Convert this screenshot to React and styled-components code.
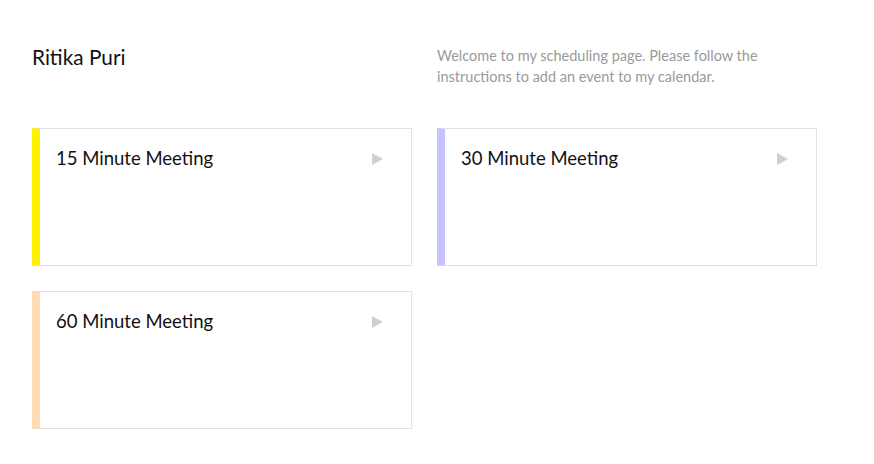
import React from "react";
import styled, { createGlobalStyle } from "styled-components";

const Global = createGlobalStyle`
  body {
    margin: 0;
    background: #fff;
    font-family: Lato, "Open Sans", sans-serif;
    color: #111;
  }
`;

const Page = styled.div`
  padding: 45px 32px 32px;
`;

const Grid = styled.div`
  display: grid;
  grid-template-columns: 380px 380px;
  column-gap: 25px;
  row-gap: 25px;
`;

const Header = styled(Grid)`
  margin-bottom: 41px;
  align-items: start;
`;

const Name = styled.h1`
  margin: 0;
  font-size: 20.8px;
  font-weight: 400;
  line-height: 24px;
`;

const Intro = styled.p`
  margin: 0;
  font-size: 14.5px;
  line-height: 21px;
  color: #9a9a9a;
`;

const Card = styled.div`
  height: 138px;
  box-sizing: border-box;
  border: 1px solid #e2e2e2;
  border-left: 8px solid ${(p) => p.$color};
  display: flex;
  justify-content: space-between;
  align-items: flex-start;
  padding: 17px 28px 0 16px;
  cursor: pointer;
`;

const Title = styled.div`
  font-size: 18.5px;
  line-height: 24px;
`;

const Arrow = styled.span`
  width: 0;
  height: 0;
  margin-top: 7px;
  border-top: 6px solid transparent;
  border-bottom: 6px solid transparent;
  border-left: 11px solid #d0d0d0;
`;

const events = [
  { title: "15 Minute Meeting", color: "#fff200" },
  { title: "30 Minute Meeting", color: "#c7c3fd" },
  { title: "60 Minute Meeting", color: "#ffdcb6" },
];

export default function App() {
  return (
    <Page>
      <Global />
      <Header>
        <Name>Ritika Puri</Name>
        <Intro>
          Welcome to my scheduling page. Please follow the instructions to add
          an event to my calendar.
        </Intro>
      </Header>
      <Grid>
        {events.map((e) => (
          <Card key={e.title} $color={e.color}>
            <Title>{e.title}</Title>
            <Arrow />
          </Card>
        ))}
      </Grid>
    </Page>
  );
}
